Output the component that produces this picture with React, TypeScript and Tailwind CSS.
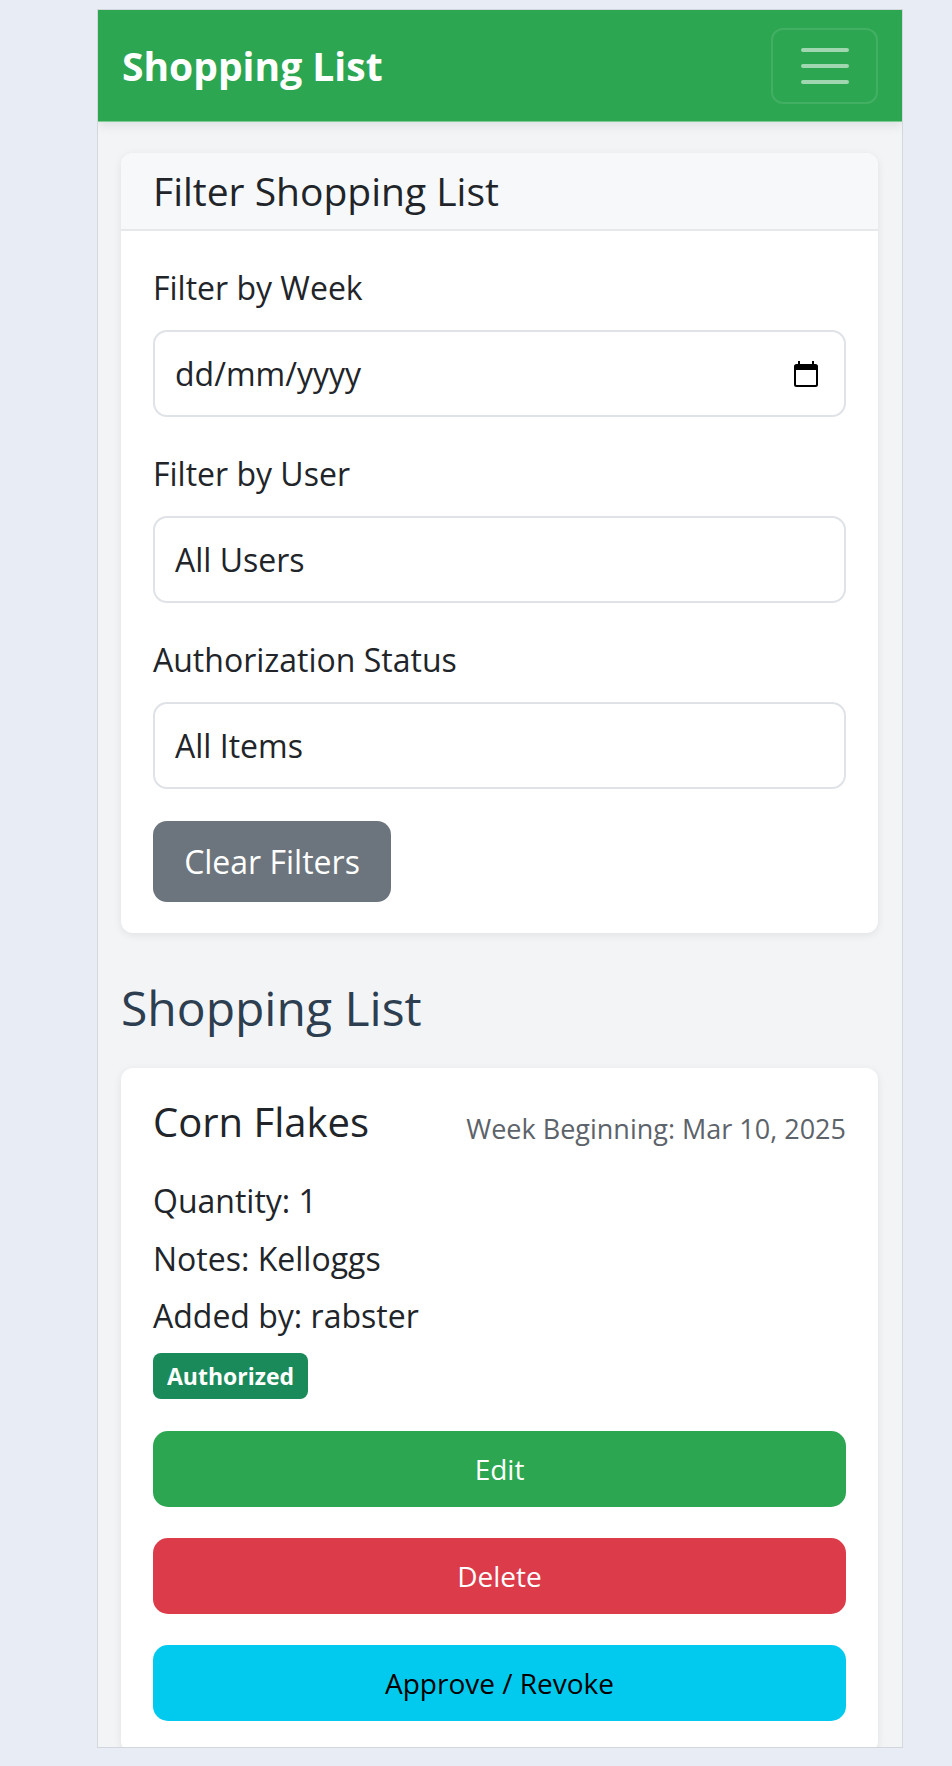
import React from "react";

const font = { fontFamily: '"Open Sans", "Noto Sans", sans-serif' };

function Hamburger() {
  return (
    <svg width="60" height="60" viewBox="0 0 30 30" aria-hidden="true">
      <path
        d="M4 7h22M4 15h22M4 23h22"
        stroke="rgba(255,255,255,0.55)"
        strokeWidth="2"
        strokeLinecap="round"
        strokeMiterlimit="10"
        fill="none"
      />
    </svg>
  );
}

function CalendarIcon() {
  return (
    <svg width="24" height="26" viewBox="0 0 24 26" aria-hidden="true">
      <path
        fillRule="evenodd"
        fill="#000"
        d="M4 0h2v3h12V0h2v3h1.5A2.5 2.5 0 0 1 24 5.5v18a2.5 2.5 0 0 1-2.5 2.5h-19A2.5 2.5 0 0 1 0 23.5v-18A2.5 2.5 0 0 1 2.5 3H4V0zM2 9v14.5c0 .3.2.5.5.5h19c.3 0 .5-.2.5-.5V9H2z"
      />
    </svg>
  );
}

function Field({ label, value, icon, last }: { label: string; value: string; icon?: boolean; last?: boolean }) {
  return (
    <div className={last ? "" : "mb-[33px]"}>
      <div className="text-[32px] leading-[48px] text-[#212529] mb-[18px]">{label}</div>
      <div className="h-[87px] rounded-[14px] border-2 border-[#dfe2e6] bg-white flex items-center justify-between pl-[20px] pr-[26px]">
        <span className="text-[32px] leading-[48px] text-[#212529]">{value}</span>
        {icon ? <CalendarIcon /> : null}
      </div>
    </div>
  );
}

export default function App() {
  return (
    <div style={font} className="min-h-[1766px] bg-[#e8ecf4] pt-[9px]">
      <div className="ml-[97px] w-[806px] h-[1739px] border border-[#d3d6db] bg-[#f3f4f6] overflow-hidden">
        {/* Navbar */}
        <div className="h-[112px] bg-[#2da652] border-b border-[#7fcb93] shadow-[0_4px_10px_rgba(0,0,0,0.08)] flex items-center justify-between pl-[24px] pr-[24px]">
          <span className="text-[39px] leading-[48px] font-bold text-white">Shopping List</span>
          <div className="w-[107px] h-[76px] rounded-[12px] border-2 border-[rgba(255,255,255,0.1)] flex items-center justify-center">
            <Hamburger />
          </div>
        </div>

        <div className="pt-[31px] pl-[23px] pr-[24px]">
          {/* Filter card */}
          <div className="bg-white rounded-[12px] shadow-[0_2px_8px_rgba(0,0,0,0.08)] overflow-hidden">
            <div className="h-[78px] bg-[#f7f8fa] border-b-2 border-[#e6e8eb] flex items-center px-[32px]">
              <span className="text-[39px] leading-[48px] text-[#212529]">Filter Shopping List</span>
            </div>
            <div className="pt-[33px] px-[32px] pb-[31px]">
              <Field label="Filter by Week" value="dd/mm/yyyy" icon />
              <Field label="Filter by User" value="All Users" />
              <Field label="Authorization Status" value="All Items" last />
              <button className="mt-[32px] w-[238px] h-[81px] rounded-[14px] bg-[#6c757d] text-white text-[32px] leading-[48px] font-medium">
                Clear Filters
              </button>
            </div>
          </div>

          {/* Heading */}
          <h2 className="mt-[46px] mb-[31px] text-[48px] leading-[58px] font-medium text-[#2c3e50]">Shopping List</h2>

          {/* Item card */}
          <div className="bg-white rounded-[12px] shadow-[0_2px_8px_rgba(0,0,0,0.08)] pt-[30px] px-[32px] pb-[32px]">
            <div className="flex justify-between items-start h-[48px] mb-[31px]">
              <span className="text-[40px] leading-[48px] font-medium text-[#212529]">Corn Flakes</span>
              <span className="mt-[14px] text-[27px] leading-[34px] text-[#5c636a]">Week Beginning: Mar 10, 2025</span>
            </div>
            <p className="text-[32px] leading-[48px] text-[#212529] mb-[10px]">Quantity: 1</p>
            <p className="text-[32px] leading-[48px] text-[#212529] mb-[9px]">Notes: Kelloggs</p>
            <p className="text-[32px] leading-[48px] text-[#212529]">Added by: rabster</p>
            <div className="mt-[13px] w-[155px] h-[46px] rounded-[8px] bg-[#1b8a5a] flex items-center justify-center">
              <span className="text-[23px] leading-[30px] font-bold text-white">Authorized</span>
            </div>
            <div className="mt-[32px] flex flex-col gap-[31px]">
              <button className="h-[76px] w-full rounded-[15px] bg-[#2da652] text-white text-[28px] font-medium">Edit</button>
              <button className="h-[76px] w-full rounded-[15px] bg-[#dc3b4a] text-white text-[28px] font-medium">Delete</button>
              <button className="h-[76px] w-full rounded-[15px] bg-[#02caee] text-black text-[28px] font-medium">Approve / Revoke</button>
            </div>
          </div>
        </div>
      </div>
    </div>
  );
}
